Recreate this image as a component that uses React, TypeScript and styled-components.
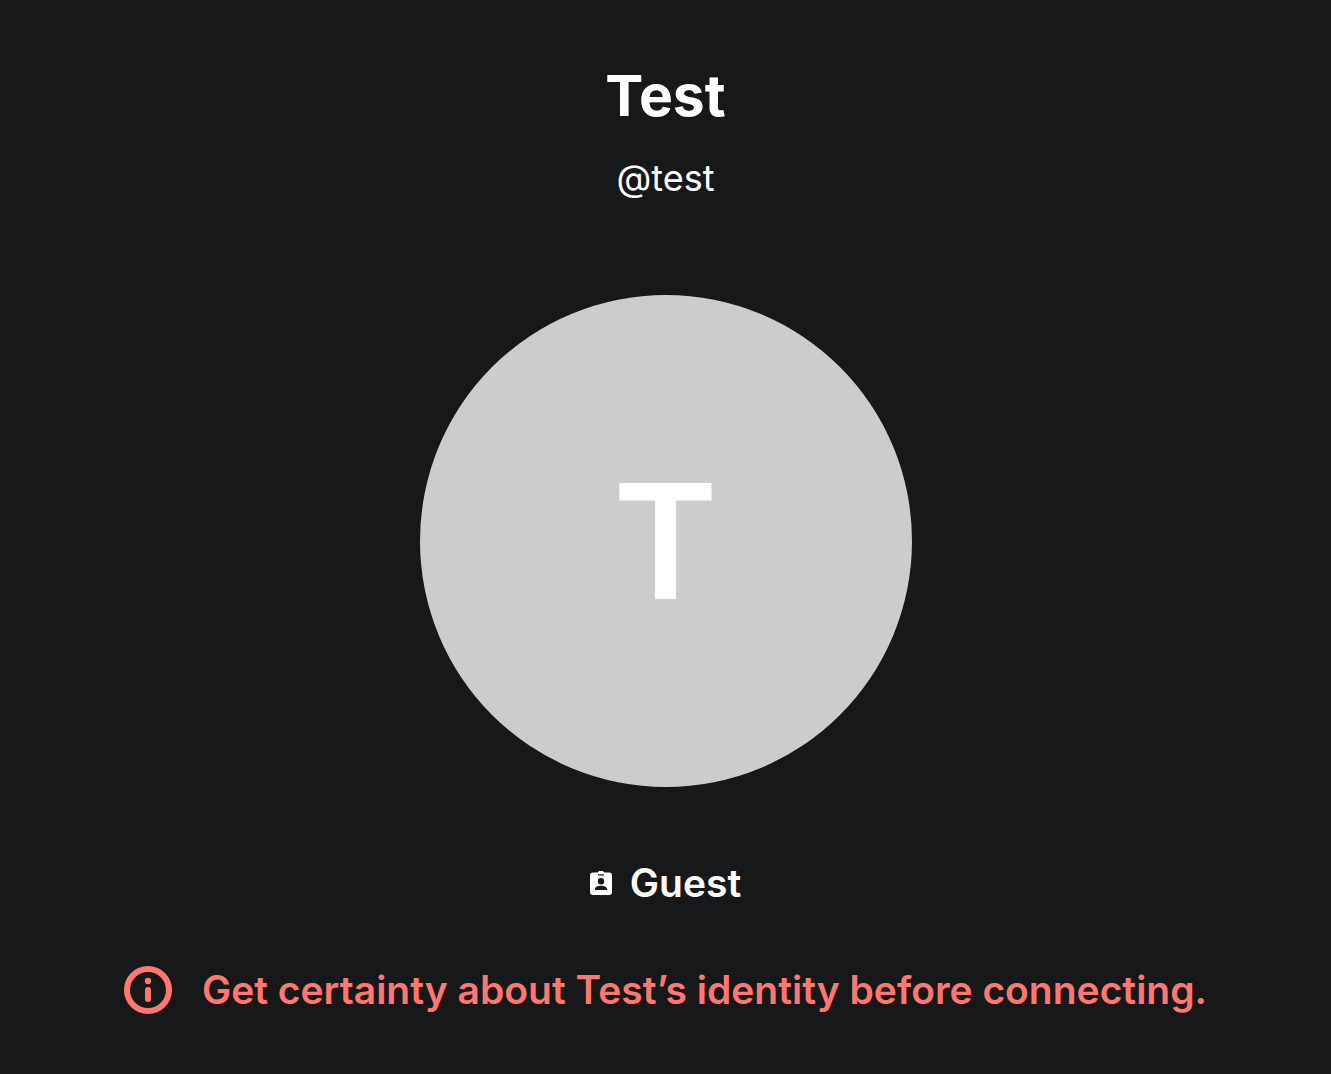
import React from "react";
import styled, { createGlobalStyle } from "styled-components";

const GlobalStyle = createGlobalStyle`
  body {
    margin: 0;
    background: #17181a;
    color: #ffffff;
    font-family: Inter, "Liberation Sans", sans-serif;
  }
`;

const Page = styled.main`
  display: flex;
  flex-direction: column;
  align-items: center;
  min-height: 100vh;
  box-sizing: border-box;
  padding: 60px 32px;
`;

const Name = styled.h1`
  margin: 0;
  font-size: 57px;
  line-height: 72px;
  font-weight: 700;
`;

const Handle = styled.p`
  margin: 24px 0 0;
  font-size: 36px;
  line-height: 44px;
`;

const Avatar = styled.div`
  display: flex;
  align-items: center;
  justify-content: center;
  width: 492px;
  height: 492px;
  margin-top: 95px;
  border-radius: 50%;
  background: #cccccc;
  font-size: 159px;
  line-height: 192px;
  font-weight: 600;
`;

const Role = styled.p`
  display: flex;
  align-items: center;
  gap: 18px;
  margin: 72px 0 0;
  font-size: 39px;
  line-height: 48px;
  font-weight: 600;
`;

const Warning = styled.p`
  display: flex;
  align-items: center;
  gap: 30px;
  margin: 59px 0 0;
  color: #ff7770;
  font-size: 39px;
  line-height: 48px;
  font-weight: 600;
`;

const Icon = styled.svg`
  flex: none;
`;

function GuestIcon() {
  return (
    <Icon width="22" height="24" viewBox="0 0 22 24" fill="currentColor" aria-hidden="true">
      <path
        fillRule="evenodd"
        d="M3 1.500h4.800a3.500 3.500 0 0 1 6.400 0H19a3 3 0 0 1 3 3V21a3 3 0 0 1-3 3H3a3 3 0 0 1-3-3V4.500a3 3 0 0 1 3-3ZM8 3.200v1.400h6V3.200ZM11 7a3.200 3.200 0 1 0 0 6.400A3.200 3.200 0 0 0 11 7ZM5 19h12v-1c0-2-3-3.200-6-3.200S5 16 5 18Z"
      />
    </Icon>
  );
}

function InfoIcon() {
  return (
    <Icon width="48" height="48" viewBox="0 0 48 48" fill="none" aria-hidden="true">
      <circle cx="24" cy="24" r="21" stroke="currentColor" strokeWidth="6" />
      <circle cx="24" cy="15" r="3.200" fill="currentColor" />
      <rect x="21" y="21" width="6" height="15" rx="3" fill="currentColor" />
    </Icon>
  );
}

export default function App() {
  return (
    <>
      <GlobalStyle />
      <Page>
        <Name>Test</Name>
        <Handle>@test</Handle>
        <Avatar>T</Avatar>
        <Role>
          <GuestIcon />
          Guest
        </Role>
        <Warning>
          <InfoIcon />
          Get certainty about Test’s identity before connecting.
        </Warning>
      </Page>
    </>
  );
}
